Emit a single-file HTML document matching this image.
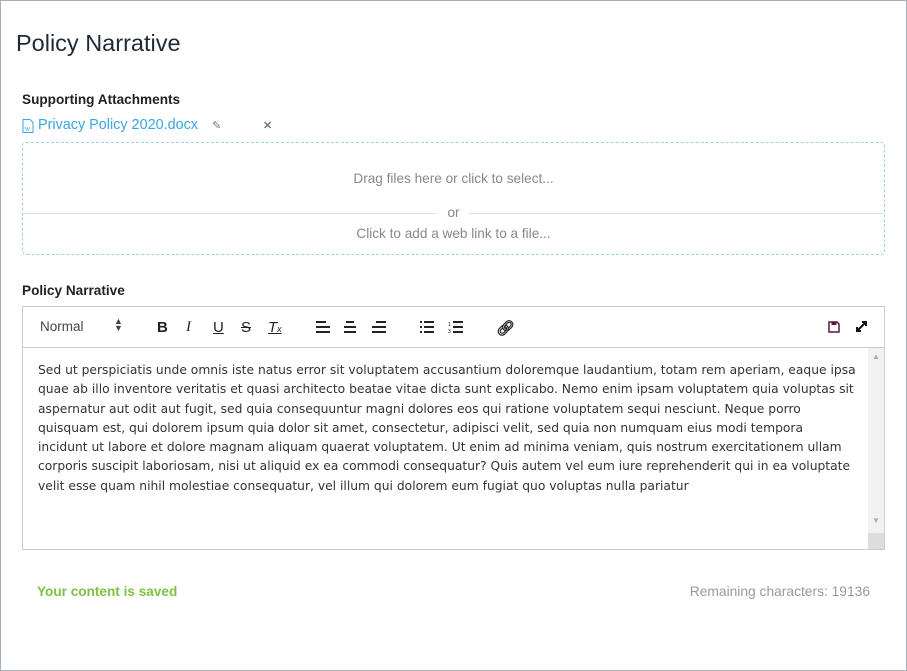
<!DOCTYPE html>
<html><head><style>
*{box-sizing:border-box;margin:0;padding:0}
body{width:907px;height:671px;background:#fff;font-family:"Liberation Sans",sans-serif;position:relative;overflow:hidden}
.frame{position:absolute;left:0;top:0;width:907px;height:671px;border:1px solid #a7b0b8}
.abs{position:absolute;white-space:nowrap}
h1{position:absolute;left:16px;top:30px;font-size:23.5px;font-weight:normal;color:#1e2a35}
.lbl{font-size:13.6px;font-weight:bold;color:#222}
.drop{position:absolute;left:22px;top:142px;width:863px;height:113px;border:1px dashed #9fd3d6;border-radius:4px}
.tb{position:absolute;left:22px;top:306px;width:863px;height:42px;border:1px solid #ccc;background:#fff}
.ed{position:absolute;left:22px;top:347px;width:863px;height:203px;border:1px solid #ccc;background:#fff}
.txt{position:absolute;left:15px;top:13px;white-space:nowrap;line-height:19.3px;color:#333;font-family:"DejaVu Sans","Liberation Sans",sans-serif;font-size:12.3px}
.sb{position:absolute;right:0;top:0;width:16px;height:201px;background:#f1f1f1}
.ic{position:absolute;top:12px;font-size:15px;color:#222}
.g{font-size:13.6px;color:#888}
</style></head><body>
<div class="frame"></div>
<h1>Policy Narrative</h1>
<div class="abs lbl" style="left:22px;top:92px">Supporting Attachments</div>
<svg class="abs" style="left:22px;top:119px" width="12" height="14" viewBox="0 0 12 14"><path d="M1 .5h7l3 3v10H1z" fill="none" stroke="#3aa6e0"/><text x="2.5" y="12" font-size="8" fill="#3aa6e0" font-family="Liberation Serif">w</text></svg>
<div class="abs" style="left:38px;top:117px;font-size:14.4px;color:#3aa6e0">Privacy Policy 2020.docx</div>
<div class="abs" style="left:212px;top:119px;font-size:11px;color:#777">✎</div>
<div class="abs" style="left:263px;top:119px;font-size:11px;color:#777;font-weight:bold">✕</div>
<div class="drop">
 <div class="abs g" style="left:0;width:861px;text-align:center;top:28px">Drag files here or click to select...</div>
 <div class="abs" style="left:0;top:70px;width:413px;border-top:1px solid #ddd"></div>
 <div class="abs" style="left:446px;top:70px;width:415px;border-top:1px solid #ddd"></div>
 <div class="abs g" style="left:0;width:861px;text-align:center;top:62px">or</div>
 <div class="abs g" style="left:0;width:861px;text-align:center;top:83px">Click to add a web link to a file...</div>
</div>
<div class="abs lbl" style="left:22px;top:283px">Policy Narrative</div>
<div class="tb">
 <div class="abs" style="left:17px;top:12px;font-size:13.5px;color:#444">Normal</div>
 <div class="abs" style="left:91px;top:11px;font-size:9px;color:#444;line-height:7px">▲<br>▼</div>
 <div class="ic" style="left:134px;font-weight:bold">B</div>
 <div class="ic" style="left:163px;font-style:italic;font-family:'Liberation Serif'">I</div>
 <div class="ic" style="left:190px;text-decoration:underline">U</div>
 <div class="ic" style="left:218px;text-decoration:line-through">S</div>
 <div class="ic" style="left:245px;font-style:italic;text-decoration:underline">T<span style="font-size:9px">x</span></div>
 <svg class="abs" style="left:293px;top:14px" width="70" height="12"><g stroke="#222" stroke-width="2"><path d="M0 1h10M0 6h14M0 11h14"/><path d="M30 1h8M28 6h12M28 11h12"/><path d="M60 1h10M56 6h14M56 11h14"/></g></svg>
 <svg class="abs" style="left:397px;top:14px" width="45" height="12"><g stroke="#222" stroke-width="2"><path d="M0 1h2M4 1h10M0 6h2M4 6h10M0 11h2M4 11h10M33 1h10M33 6h10M33 11h10"/></g><text x="28" y="5" font-size="5">1</text><text x="28" y="12" font-size="5">3</text></svg>
 <div class="ic" style="left:473px;font-weight:bold">🔗︎</div>
 <svg class="abs" style="left:805px;top:14px" width="12" height="12"><path d="M1 1h8l2 2v8H1z" fill="none" stroke="#5a1640" stroke-width="1.5"/><rect x="3.5" y="1" width="5" height="3" fill="#5a1640"/></svg>
 <svg class="abs" style="left:832px;top:13px" width="13" height="13"><path d="M2 11L11 2M7 2h4v4M2 7v4h4" stroke="#111" stroke-width="2" fill="none"/></svg>
</div>
<div class="ed">
 <div class="txt">Sed ut perspiciatis unde omnis iste natus error sit voluptatem accusantium doloremque laudantium, totam rem aperiam, eaque ipsa<br>quae ab illo inventore veritatis et quasi architecto beatae vitae dicta sunt explicabo. Nemo enim ipsam voluptatem quia voluptas sit<br>aspernatur aut odit aut fugit, sed quia consequuntur magni dolores eos qui ratione voluptatem sequi nesciunt. Neque porro<br>quisquam est, qui dolorem ipsum quia dolor sit amet, consectetur, adipisci velit, sed quia non numquam eius modi tempora<br>incidunt ut labore et dolore magnam aliquam quaerat voluptatem. Ut enim ad minima veniam, quis nostrum exercitationem ullam<br>corporis suscipit laboriosam, nisi ut aliquid ex ea commodi consequatur? Quis autem vel eum iure reprehenderit qui in ea voluptate<br>velit esse quam nihil molestiae consequatur, vel illum qui dolorem eum fugiat quo voluptas nulla pariatur</div>
 <div class="sb"><div class="abs" style="left:4px;top:4px;font-size:8px;color:#aaa">▲</div><div class="abs" style="left:4px;top:168px;font-size:8px;color:#aaa">▼</div><div class="abs" style="left:0;top:185px;width:16px;height:16px;background:#ddd"></div></div>
</div>
<div class="abs" style="left:37px;top:584px;font-size:13.6px;font-weight:bold;color:#7cc242">Your content is saved</div>
<div class="abs" style="right:37px;top:584px;font-size:13.8px;color:#999">Remaining characters: 19136</div>
</body></html>
